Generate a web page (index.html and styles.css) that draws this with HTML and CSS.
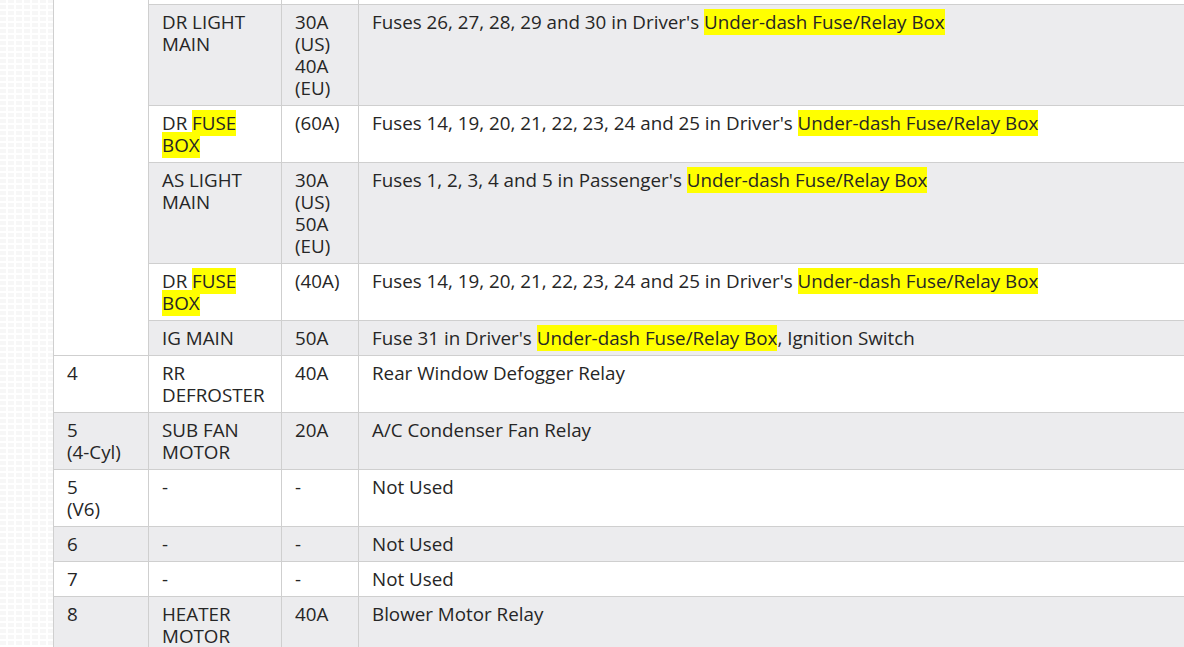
FILE: index.html
```html
<!DOCTYPE html>
<html lang="en">
<head>
<meta charset="utf-8">
<title>Fuse table</title>
<link rel="stylesheet" href="styles.css">
</head>
<body>
<div class="page">
  <div class="side"></div>
  <div class="content">
    <table class="fuses">
      <colgroup>
        <col class="c-no">
        <col class="c-name">
        <col class="c-amp">
        <col class="c-desc">
      </colgroup>
      <tbody>
        <tr class="spacer">
          <td class="no" rowspan="6"></td>
          <td></td><td></td><td></td>
        </tr>
        <tr class="alt">
          <td>DR LIGHT MAIN</td>
          <td>30A (US) 40A (EU)</td>
          <td>Fuses 26, 27, 28, 29 and 30 in Driver's <span class="hl">Under-dash Fuse/Relay Box</span></td>
        </tr>
        <tr>
          <td>DR <span class="hl">FUSE BOX</span></td>
          <td>(60A)</td>
          <td>Fuses 14, 19, 20, 21, 22, 23, 24 and 25 in Driver's <span class="hl">Under-dash Fuse/Relay Box</span></td>
        </tr>
        <tr class="alt">
          <td>AS LIGHT MAIN</td>
          <td>30A (US) 50A (EU)</td>
          <td>Fuses 1, 2, 3, 4 and 5 in Passenger's <span class="hl">Under-dash Fuse/Relay Box</span></td>
        </tr>
        <tr>
          <td>DR <span class="hl">FUSE BOX</span></td>
          <td>(40A)</td>
          <td>Fuses 14, 19, 20, 21, 22, 23, 24 and 25 in Driver's <span class="hl">Under-dash Fuse/Relay Box</span></td>
        </tr>
        <tr class="alt">
          <td>IG MAIN</td>
          <td>50A</td>
          <td>Fuse 31 in Driver's <span class="hl">Under-dash Fuse/Relay Box</span>, Ignition Switch</td>
        </tr>
        <tr>
          <td>4</td>
          <td>RR DEFROSTER</td>
          <td>40A</td>
          <td>Rear Window Defogger Relay</td>
        </tr>
        <tr class="alt">
          <td>5<br><span class="nw">(4-Cyl)</span></td>
          <td>SUB FAN MOTOR</td>
          <td>20A</td>
          <td>A/C Condenser Fan Relay</td>
        </tr>
        <tr>
          <td>5<br>(V6)</td>
          <td>-</td>
          <td>-</td>
          <td>Not Used</td>
        </tr>
        <tr class="alt">
          <td>6</td>
          <td>-</td>
          <td>-</td>
          <td>Not Used</td>
        </tr>
        <tr>
          <td>7</td>
          <td>-</td>
          <td>-</td>
          <td>Not Used</td>
        </tr>
        <tr class="alt">
          <td>8</td>
          <td>HEATER MOTOR</td>
          <td>40A</td>
          <td>Blower Motor Relay</td>
        </tr>
      </tbody>
    </table>
  </div>
</div>
</body>
</html>
```
FILE: styles.css
```css
html, body {
  margin: 0;
  padding: 0;
  height: 100%;
  overflow: hidden;
  background: #ffffff;
}

.page {
  display: flex;
  height: 100%;
}

.side {
  flex: 0 0 53px;
  background-color: #fdfdfd;
  background-image:
    repeating-linear-gradient(0deg, #ffffff 0 2px, transparent 2px 6px),
    repeating-linear-gradient(90deg, #f7f7f7 0 6px, #ffffff 6px 8px);
}

.content {
  flex: 1 1 auto;
  min-width: 0;
}

.fuses {
  border-collapse: collapse;
  table-layout: fixed;
  width: 1300px;
  font-family: "Open Sans", "Noto Sans", sans-serif;
  font-size: 18.8px;
  line-height: 22px;
  color: #262626;
}

.c-no { width: 95px; }
.c-name { width: 133px; }
.c-amp { width: 77px; }

.fuses td {
  border: 1px solid #cfcfcf;
  padding: 6px 13px;
  vertical-align: top;
  background: #ffffff;
}

.fuses tr.alt td {
  background: #ececee;
}

.fuses td.no {
  background: #ffffff;
}

.fuses tr.spacer td {
  height: 4px;
  padding: 0 13px;
  border-top: none;
}

.nw {
  white-space: nowrap;
}

.hl {
  background: #ffff00;
}
```
